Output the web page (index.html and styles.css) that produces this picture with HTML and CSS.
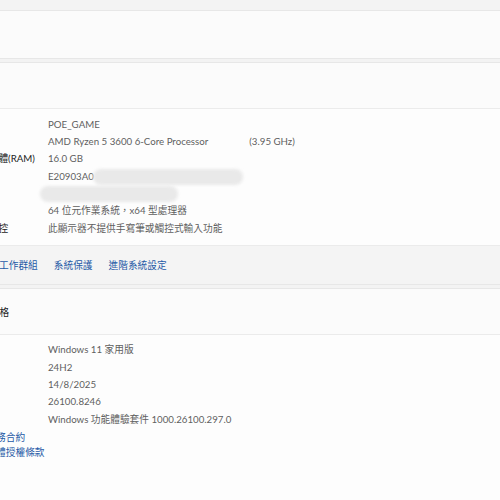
FILE: index.html
```html
<!DOCTYPE html>
<html lang="zh-Hant">
<head>
<meta charset="utf-8">
<link rel="stylesheet" href="styles.css">
</head>
<body>
<div class="page">
  <div class="top-strip"></div>
  <section class="card plain"></section>
  <section class="card">
    <div class="card-head"><span class="head-title hidden">裝置規格</span></div>
    <div class="card-body">
      <div class="specs">
        <div class="label">裝置名稱</div><div class="value">POE_GAME</div>
        <div class="label">處理器</div><div class="value"><span>AMD Ryzen 5 3600 6-Core Processor</span><span class="freq">(3.95 GHz)</span></div>
        <div class="label">已安裝記憶體(RAM)</div><div class="value">16.0 GB</div>
        <div class="label">裝置識別碼</div><div class="value redact-row">E20903A0<span class="blob blob-a"></span></div>
        <div class="label">產品識別碼</div><div class="value redact-row"><span class="blob blob-b"></span></div>
        <div class="label">系統類型</div><div class="value">64 位元作業系統，x64 型處理器</div>
        <div class="label">手寫筆與觸控</div><div class="value">此顯示器不提供手寫筆或觸控式輸入功能</div>
      </div>
    </div>
    <div class="card-foot">
      <a class="link">網域或工作群組</a>
      <a class="link">系統保護</a>
      <a class="link">進階系統設定</a>
    </div>
  </section>
  <section class="card">
    <div class="card-head"><span class="head-title shown">Windows 規格</span></div>
    <div class="card-body last">
      <div class="specs">
        <div class="label">版本</div><div class="value">Windows 11 家用版</div>
        <div class="label">版本</div><div class="value">24H2</div>
        <div class="label">安裝於</div><div class="value">14/8/2025</div>
        <div class="label">OS 組建</div><div class="value">26100.8246</div>
        <div class="label">體驗</div><div class="value">Windows 功能體驗套件 1000.26100.297.0</div>
      </div>
      <div class="links">
        <a class="link">Microsoft 服務合約</a>
        <a class="link">Microsoft 軟體授權條款</a>
      </div>
    </div>
  </section>
</div>
</body>
</html>
```

FILE: styles.css
```css
html, body {
  margin: 0;
  padding: 0;
}
body {
  width: 500px;
  height: 500px;
  overflow: hidden;
  background: #f3f3f3;
  font-family: "Lato", "Noto Sans CJK TC", sans-serif;
  font-size: 9.7px;
  color: #1b1b1b;
}
.page {
  display: flex;
  flex-direction: column;
  gap: 3px;
  margin-left: -50px;
  width: 600px;
}
.top-strip {
  height: 7px;
}
.card {
  background: #fbfbfb;
  border-top: 1px solid #e7e7e7;
  border-bottom: 1px solid #e7e7e7;
}
.card.plain {
  height: 47px;
}
.card-head {
  height: 45px;
  display: flex;
  align-items: center;
  border-bottom: 1px solid #ebebeb;
}
.head-title {
  color: #1b1b1b;
  white-space: nowrap;
}
.head-title.hidden {
  visibility: hidden;
}
.head-title.shown {
  margin-left: -3px;
}
.card-body {
  background: #fdfdfd;
  padding: 6.5px 0 8.5px 0;
  border-bottom: 1px solid #ebebeb;
}
.card-body.last {
  padding-top: 6px;
  border-bottom: none;
  height: 200px;
}
.specs {
  display: grid;
  grid-template-columns: 98px 1fr;
  line-height: 17.35px;
}
.label {
  color: #1b1b1b;
  white-space: nowrap;
}
.value {
  color: #5f5f5f;
  white-space: nowrap;
  display: flex;
}
.freq {
  margin-left: 41px;
}
.redact-row {
  position: relative;
}
.blob {
  position: absolute;
  background: #e9e9e9;
  border-radius: 9px;
  filter: blur(1.5px);
}
.blob-a {
  left: 45px;
  top: 1px;
  width: 150px;
  height: 16px;
}
.blob-b {
  left: -8px;
  top: 1px;
  width: 138px;
  height: 16px;
}
.card-foot {
  background: #f4f4f4;
  height: 38px;
  display: flex;
  align-items: center;
  gap: 16px;
  padding-left: 20px;
}
.link {
  color: #1f5aa6;
  cursor: pointer;
  white-space: nowrap;
}
.links {
  display: flex;
  flex-direction: column;
  margin-left: -7px;
  margin-top: 2px;
  line-height: 15px;
}
```
